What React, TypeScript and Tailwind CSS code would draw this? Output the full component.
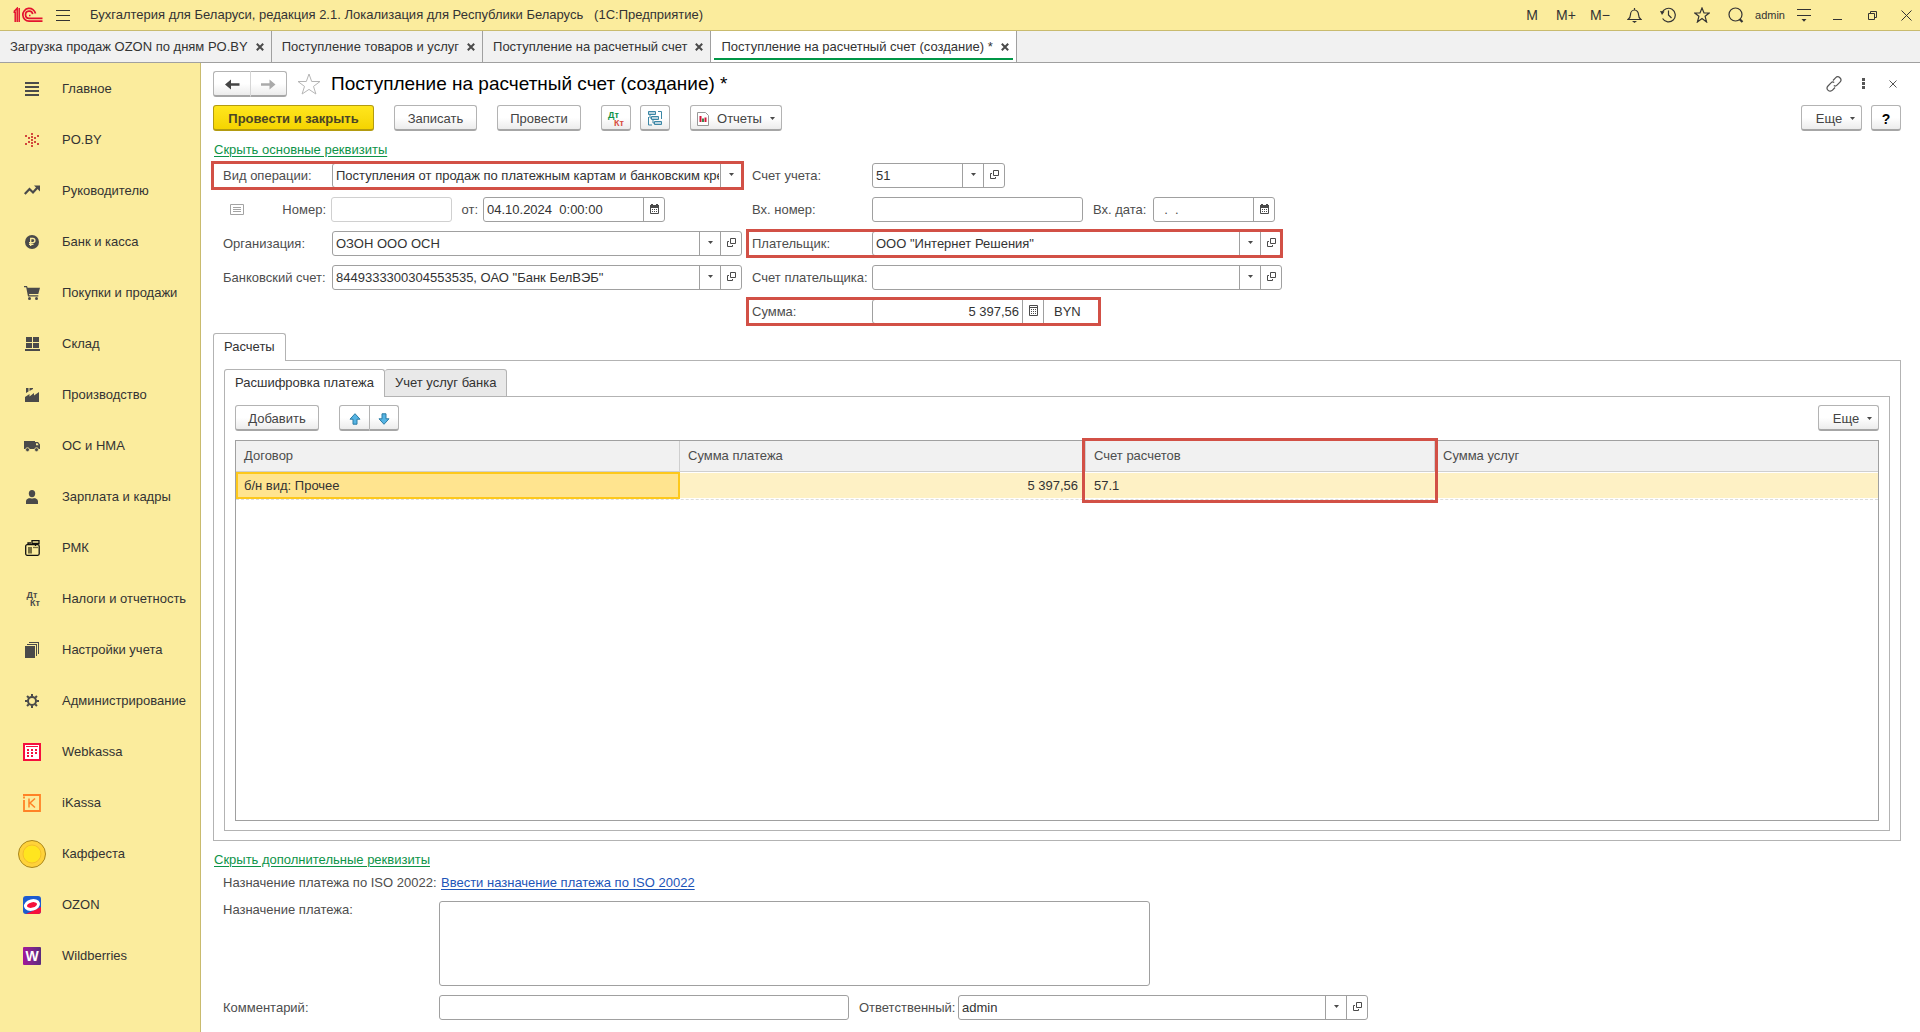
import { useState } from "react";
import type { ReactNode } from "react";

const INK = "#4a4a4a";

function ArrowDown() {
  return (
    <svg width="5" height="3" viewBox="0 0 5 3" fill={INK} className="shrink-0">
      <path d="M0 0h5L2.500 3z" />
    </svg>
  );
}

function OpenIcon() {
  return (
    <svg width="9" height="9" viewBox="0 0 9 9" fill="none" stroke={INK} className="shrink-0">
      <path d="M3.500.5h5v5h-5zM2 3.500H.5v5h5V7" />
    </svg>
  );
}

function CalendarIcon() {
  return (
    <svg width="9" height="10" viewBox="0 0 9 10" className="shrink-0">
      <path d="M.5 2.500h8v7h-8z" fill="none" stroke={INK} />
      <path d="M0 1h1V0h2v1h3V0h2v1h1v3H0z" fill={INK} />
      <path d="M2 5h1v1H2zM4 5h1v1H4zM6 5h1v1H6zM2 7h1v1H2zM4 7h1v1H4zM6 7h1v1H6z" fill={INK} />
    </svg>
  );
}

function CalculatorIcon() {
  return (
    <svg width="9" height="11" viewBox="0 0 9 11" className="shrink-0">
      <path d="M.5.5h8v10h-8zM.5 2.500h8" fill="none" stroke={INK} />
      <path d="M2 4h1v1H2zM4 4h1v1H4zM6 4h1v1H6zM2 6h1v1H2zM4 6h1v1H4zM6 6h1v1H6zM2 8h1v1H2zM4 8h1v1H4zM6 8h1v1H6z" fill={INK} />
    </svg>
  );
}

function CloseCross() {
  return (
    <svg width="8" height="8" viewBox="0 0 8 8" stroke={INK} strokeWidth="2">
      <path d="M.8.8l6.400 6.400M7.200.8L.8 7.200" />
    </svg>
  );
}

function Logo() {
  return (
    <svg width="30" height="16" viewBox="0 0 30 16" fill="none" stroke="#e3122f" strokeWidth="1.700">
      <path d="M1 4.500L4.200 1.200V15M.5 5.200h1.700V15M6.200 1v14" strokeWidth="1.500" />
      <path d="M22.500 6.500A6.400 6.400 0 1 0 16 14.200h13.500" />
      <path d="M19.700 7.200a3.600 3.600 0 1 0-3.600 4.100h13.400" />
      <path d="M16 8.600h1.500" strokeWidth="1.500" />
    </svg>
  );
}

type NavItem = { label: string; icon: ReactNode };

const rays = [0, 45, 90, 135, 180, 225, 270, 315];

const navItems: NavItem[] = [
  {
    label: "Главное",
    icon: (
      <svg width="14" height="14" viewBox="0 0 14 14" fill={INK}>
        <path d="M0 0h14v2H0zM0 4h14v2H0zM0 8h14v2H0zM0 12h14v2H0z" />
      </svg>
    ),
  },
  {
    label: "PO.BY",
    icon: (
      <svg width="14" height="14" viewBox="0 0 14 14" fill="#d2483c">
        <path d="M6 0h2v2H6zM6 3h2v2H6zM6 6h2v2H6zM6 9h2v2H6zM6 12h2v2H6zM0 2h2v2H0zM3 4h2v2H3zM12 2h2v2h-2zM9 4h2v2H9zM0 10h2v2H0zM3 8h2v2H3zM12 10h2v2h-2zM9 8h2v2H9z" />
      </svg>
    ),
  },
  {
    label: "Руководителю",
    icon: (
      <svg width="16" height="12" viewBox="0 0 16 12" fill="none" stroke={INK} strokeWidth="2.200">
        <path d="M.8 9l4.700-5L9 7.500l4.500-5" />
        <path d="M10 .5h6v6z" fill={INK} stroke="none" />
      </svg>
    ),
  },
  {
    label: "Банк и касса",
    icon: (
      <svg width="14" height="14" viewBox="0 0 14 14">
        <circle cx="7" cy="7" r="7" fill={INK} />
        <path d="M5.700 11V3.500h2.100a2 2 0 0 1 0 4.200H4M4 9.300h4.500" fill="none" stroke="#fbec9d" strokeWidth="1.300" />
      </svg>
    ),
  },
  {
    label: "Покупки и продажи",
    icon: (
      <svg width="16" height="14" viewBox="0 0 16 14" fill={INK}>
        <path d="M0 0h3l.6 1.700H16L14.300 8H5l.3 1.300h9v1.200H4L2.200 1.200H0z" />
        <circle cx="5.500" cy="12.500" r="1.500" />
        <circle cx="12.500" cy="12.500" r="1.500" />
      </svg>
    ),
  },
  {
    label: "Склад",
    icon: (
      <svg width="15" height="14" viewBox="0 0 15 14" fill={INK}>
        <path d="M1 0h6v5H1zM8 0h6v5H8zM1 6h6v5H1zM8 6h6v5H8zM0 12h15v2H0z" />
      </svg>
    ),
  },
  {
    label: "Производство",
    icon: (
      <svg width="14" height="14" viewBox="0 0 14 14" fill={INK}>
        <path d="M0 14V9l4.500-3v2.500L9 5v2.500L14 4v10zM1 0h2.500v3.500L1 5zM4.500 0H8v1L4.500 3z" />
      </svg>
    ),
  },
  {
    label: "ОС и НМА",
    icon: (
      <svg width="16" height="12" viewBox="0 0 16 12" fill={INK}>
        <path fillRule="evenodd" d="M0 1h11v8H0zM11 2h3l2 2.500V9h-5zM12 3.200v2h2.600l-1-2z" />
        <circle cx="3.500" cy="9.700" r="2" stroke="#fbec9d" strokeWidth=".8" />
        <circle cx="12.500" cy="9.700" r="2" stroke="#fbec9d" strokeWidth=".8" />
      </svg>
    ),
  },
  {
    label: "Зарплата и кадры",
    icon: (
      <svg width="12" height="14" viewBox="0 0 12 14" fill={INK}>
        <ellipse cx="6" cy="3.600" rx="3.200" ry="3.600" />
        <path d="M0 14v-2.500C0 9 2.500 8.300 4 8c1 .7 3 .7 4 0 1.500.3 4 1 4 3.500V14z" />
      </svg>
    ),
  },
  {
    label: "РМК",
    icon: (
      <svg width="15" height="16" viewBox="0 0 15 16" fill="none" stroke="#111" strokeWidth="1.300">
        <rect x=".7" y="4.700" width="13.500" height="10.600" rx="1.500" />
        <path d="M7 .7h7v2.800H7zM10.500 3.500V6" />
        <path d="M3 5V3h3" />
        <path d="M3 7h4v6.500H3z" fill="#77703f" stroke="none" />
        <path d="M8 7.500h5" stroke="#77703f" />
      </svg>
    ),
  },
  {
    label: "Налоги и отчетность",
    icon: (
      <span className="flex w-4 flex-col text-[9px] font-bold leading-[8px] text-[#4a4a4a]" aria-hidden="true">
        <span>Дт</span>
        <span className="self-end">Кт</span>
      </span>
    ),
  },
  {
    label: "Настройки учета",
    icon: (
      <svg width="14" height="16" viewBox="0 0 14 16" fill={INK}>
        <path d="M0 4h10v12H0zM2 2h10v12h-1V3H2zM4 0h10v12h-1V1H4z" />
      </svg>
    ),
  },
  {
    label: "Администрирование",
    icon: (
      <svg width="14" height="14" viewBox="0 0 14 14" fill="none" stroke={INK} strokeWidth="2">
        <circle cx="7" cy="7" r="4" />
        {rays.map((deg) => (
          <path key={deg} d="M7 0v2.500" transform={`rotate(${deg} 7 7)`} />
        ))}
      </svg>
    ),
  },
  {
    label: "Webkassa",
    icon: (
      <svg width="18" height="18" viewBox="0 0 18 18">
        <path d="M1 1h16v16H1z" fill="#fff" stroke="#f5103c" strokeWidth="2" />
        <path d="M3 3h12v1H3zM4 6h2v2H4zM8 6h2v2H8zM12 6h2v2h-2zM4 9h2v2H4zM8 9h2v2H8zM12 9h2v2h-2zM4 12h2v2H4zM8 12h2v2H8z" fill="#f5103c" />
      </svg>
    ),
  },
  {
    label: "iKassa",
    icon: (
      <svg width="18" height="18" viewBox="0 0 18 18" fill="none" stroke="#ff8226" strokeWidth="1.800">
        <path d="M0 1h17v16H1V6M1 2.500V4.500" />
        <path d="M6 4.500v9M12 4.500L7 9l5 4.500" strokeWidth="1.500" />
      </svg>
    ),
  },
  {
    label: "Каффеста",
    icon: (
      <svg width="28" height="28" viewBox="0 0 28 28">
        <circle cx="14" cy="14" r="13.500" fill="#ffd23a" stroke="#a9861c" />
        <circle cx="14" cy="14" r="9" fill="#ffe51f" stroke="#f5bf2a" />
      </svg>
    ),
  },
  {
    label: "OZON",
    icon: (
      <svg width="18" height="18" viewBox="0 0 18 18">
        <rect width="18" height="18" rx="3" fill="#1c5bd0" />
        <path d="M3 18l15-7v4a3 3 0 0 1-3 3z" fill="#f5103c" />
        <ellipse cx="9" cy="9" rx="6.600" ry="4.200" fill="#f5103c" stroke="#fff" strokeWidth="3" transform="rotate(-14 9 9)" />
      </svg>
    ),
  },
  {
    label: "Wildberries",
    icon: (
      <span
        className="flex h-[18px] w-[18px] items-center justify-center rounded-[1px] bg-linear-to-r from-[#a3149b] to-[#5a2a7d] text-sm font-bold text-white"
        aria-hidden="true"
      >
        W
      </span>
    ),
  },
];

const windowTabs = [
  "Загрузка продаж OZON по дням PO.BY",
  "Поступление товаров и услуг",
  "Поступление на расчетный счет",
  "Поступление на расчетный счет (создание) *",
];

function TitleBar() {
  return (
    <header className="flex h-[31px] items-center border-b border-[#c9bb6e] bg-[#fbec9d] pl-[13px] pr-[6px]">
      <Logo />
      <button aria-label="Меню" className="ml-[13px] mr-5">
        <svg width="14" height="11" viewBox="0 0 14 11" stroke="#333">
          <path d="M0 .5h14M0 5.500h14M0 10.500h14" />
        </svg>
      </button>
      <span className="whitespace-pre">
        {"Бухгалтерия для Беларуси, редакция 2.1. Локализация для Республики Беларусь   (1С:Предприятие)"}
      </span>
      <div className="ml-auto flex items-center gap-[18px] whitespace-nowrap text-[#333]">
        <button className="flex w-4 justify-center text-sm">M</button>
        <button className="flex w-4 justify-center text-sm">M+</button>
        <button className="flex w-4 justify-center text-sm">M−</button>
        <button aria-label="Уведомления" className="flex w-4 justify-center">
          <svg width="15" height="15" viewBox="0 0 15 15" fill="none" stroke="#333" strokeWidth="1.200">
            <path d="M7.500 0v1.500M1 11.500h13c-2-1.500-2.500-2.500-2.500-5a4 4.500 0 0 0-8 0c0 2.500-.5 3.500-2.500 5z" />
            <path d="M5 13h5l-2.500 2z" fill="#333" stroke="none" />
          </svg>
        </button>
        <button aria-label="История" className="flex w-4 justify-center">
          <svg width="16" height="16" viewBox="0 0 16 16" fill="none" stroke="#333" strokeWidth="1.200">
            <path d="M2 6a6.800 6.800 0 1 1 .6 5.500M8.500 3.500V8l3 3" />
            <path d="M0 4l4.500.5L2 8z" fill="#333" stroke="none" />
          </svg>
        </button>
        <button aria-label="Избранное" className="flex w-4 justify-center">
          <svg width="16" height="16" viewBox="0 0 16 16" fill="none" stroke="#333" strokeWidth="1.200">
            <path d="M8 1l2 5h5.200l-4.100 3.300L12.600 15 8 11.600 3.400 15l1.500-5.700L.8 6H6z" />
          </svg>
        </button>
        <button aria-label="Поиск" className="flex w-4 justify-center">
          <svg width="16" height="16" viewBox="0 0 16 16" fill="none" stroke="#333" strokeWidth="1.200">
            <circle cx="7.500" cy="7.500" r="6.500" />
            <path d="M11.500 12l3 3" strokeWidth="2.200" />
          </svg>
        </button>
        <button className="flex w-4 justify-center text-[11px]">admin</button>
        <button aria-label="Настройки" className="flex w-4 justify-center">
          <svg width="14" height="13" viewBox="0 0 14 13" stroke="#333">
            <path d="M0 .5h14M0 6.500h14" />
            <path d="M4.500 10h5L7 12.800z" fill="#333" stroke="none" />
          </svg>
        </button>
        <button aria-label="Свернуть" className="flex w-4 justify-center">
          <svg width="10" height="9" viewBox="0 0 10 9" stroke="#333">
            <path d="M0 8.500h9" />
          </svg>
        </button>
        <button aria-label="Восстановить" className="flex w-4 justify-center">
          <svg width="9" height="9" viewBox="0 0 9 9" fill="none" stroke="#333">
            <path d="M.5 2.500h6v6h-6zM2.500 2.500v-2h6v6h-2" />
          </svg>
        </button>
        <button aria-label="Закрыть" className="flex w-4 justify-center">
          <svg width="11" height="11" viewBox="0 0 11 11" stroke="#333">
            <path d="M.5.5l10 10M10.500.5l-10 10" />
          </svg>
        </button>
      </div>
    </header>
  );
}

function WindowTabs() {
  const [active, setActive] = useState(3);
  return (
    <nav className="flex h-8 border-b border-[#a0a0a0] bg-[#f1f1f1]">
      {windowTabs.map((title, i) => (
        <div
          key={title}
          className={`relative flex items-center gap-2 whitespace-nowrap border-r border-[#a0a0a0] pl-[10px] pr-[7px] ${i === active ? "bg-white" : ""}`}
        >
          <button onClick={() => setActive(i)}>{title}</button>
          <button aria-label="Закрыть вкладку">
            <CloseCross />
          </button>
          {i === active && <span className="absolute inset-x-[3px] bottom-[2px] h-[2px] bg-[#009646]" />}
        </div>
      ))}
    </nav>
  );
}

function Button({ children, className = "", label }: { children: ReactNode; className?: string; label?: string }) {
  return (
    <button
      aria-label={label}
      className={`flex h-[26px] items-center justify-center whitespace-nowrap rounded-[3px] border border-b-2 border-[#b3b3b3] border-b-[#a6a6a6] bg-linear-to-b from-white from-50% to-[#ececec] pt-[2px] text-[#444] ${className}`}
    >
      {children}
    </button>
  );
}

// Red frame round the requisites that matter for this operation
function Highlight({ className = "" }: { className?: string }) {
  return <span className={`pointer-events-none absolute border-[3px] border-[#d25046] ${className}`} />;
}

type FieldProps = {
  id: string;
  value?: string;
  className?: string;
  inputClass?: string;
  controls?: ("list" | "open" | "date" | "calc")[];
};

const controlIcons = {
  list: { icon: <ArrowDown />, title: "Выбрать из списка" },
  open: { icon: <OpenIcon />, title: "Открыть" },
  date: { icon: <CalendarIcon />, title: "Выбрать дату" },
  calc: { icon: <CalculatorIcon />, title: "Калькулятор" },
};

function Field({ id, value = "", className = "", inputClass = "", controls = [] }: FieldProps) {
  return (
    <div className={`flex h-[25px] shrink-0 rounded-[3px] border border-[#a0a0a0] bg-white ${className}`}>
      <input id={id} defaultValue={value} className={`min-w-0 flex-1 bg-transparent px-[3px] outline-none ${inputClass}`} />
      {controls.map((c) => (
        <button
          key={c}
          aria-label={controlIcons[c].title}
          className="flex w-[21px] shrink-0 items-center justify-center border-l border-[#a0a0a0] pb-[2px]"
        >
          {controlIcons[c].icon}
        </button>
      ))}
    </div>
  );
}

function Label({ id, children, className = "" }: { id: string; children: ReactNode; className?: string }) {
  return (
    <label htmlFor={id} className={`shrink-0 whitespace-nowrap text-[#4d4d4d] ${className}`}>
      {children}
    </label>
  );
}

function Requisites() {
  return (
    <div className="flex gap-[10px] pl-[10px]">
      <div className="flex w-[519px] flex-col gap-[9px]">
        <div className="relative flex items-center">
          <Label id="operation" className="w-[109px]">Вид операции:</Label>
          <div className="relative flex h-[25px] flex-1 rounded-[3px] border border-[#a0a0a0]">
            <select id="operation" className="w-full appearance-none pl-[3px] pr-[22px] outline-none">
              <option>Поступления от продаж по платежным картам и банковским кредитам</option>
            </select>
            <span className="pointer-events-none absolute inset-y-0 right-0 flex w-[21px] items-center justify-center border-l border-[#a0a0a0] bg-white pb-[2px]">
              <ArrowDown />
            </span>
          </div>
          <Highlight className="-inset-y-[2px] -left-3 -right-[2px]" />
        </div>
        <div className="flex items-center">
          <svg width="14" height="11" viewBox="0 0 14 11" fill="none" stroke="#a3a3a3" className="ml-[7px]">
            <path d="M.5.5h13v10H.5zM3 3.500h8M3 5.500h8M3 7.500h8" />
          </svg>
          <Label id="number" className="w-[87px] pr-[5px] text-right">Номер:</Label>
          <Field id="number" className="w-[121px] border-[#d0d0d0]" />
          <Label id="date" className="w-[31px] pr-[5px] text-right">от:</Label>
          <Field id="date" value="04.10.2024  0:00:00" className="w-[182px]" controls={["date"]} />
        </div>
        <div className="flex items-center">
          <Label id="organization" className="w-[109px]">Организация:</Label>
          <Field id="organization" value="ОЗОН ООО ОСН" className="flex-1" controls={["list", "open"]} />
        </div>
        <div className="flex items-center">
          <Label id="bank-account" className="w-[109px]">Банковский счет:</Label>
          <Field id="bank-account" value='8449333300304553535, ОАО "Банк БелВЭБ"' className="flex-1" controls={["list", "open"]} />
        </div>
      </div>

      <div className="flex w-[530px] flex-col gap-[9px]">
        <div className="flex items-center">
          <Label id="account" className="w-[120px]">Счет учета:</Label>
          <Field id="account" value="51" className="w-[133px]" controls={["list", "open"]} />
        </div>
        <div className="flex items-center">
          <Label id="in-number" className="w-[120px]">Вх. номер:</Label>
          <Field id="in-number" className="w-[211px]" />
          <Label id="in-date" className="w-[70px] pl-[10px]">Вх. дата:</Label>
          <Field id="in-date" value="  .  ." className="w-[122px]" inputClass="text-[#4d4d4d]" controls={["date"]} />
        </div>
        <div className="relative flex items-center">
          <Label id="payer" className="w-[120px]">Плательщик:</Label>
          <Field id="payer" value='ООО "Интернет Решения"' className="flex-1" controls={["list", "open"]} />
          <Highlight className="-inset-y-[2px] -left-[6px] -right-[1px]" />
        </div>
        <div className="flex items-center">
          <Label id="payer-account" className="w-[120px]">Счет плательщика:</Label>
          <Field id="payer-account" className="flex-1" controls={["list", "open"]} />
        </div>
        <div className="relative flex w-[348px] items-center">
          <Label id="sum" className="w-[120px]">Сумма:</Label>
          <Field id="sum" value="5 397,56" className="w-[172px] rounded-r-none" inputClass="text-right" controls={["calc"]} />
          <span className="pl-[10px]">BYN</span>
          <Highlight className="-inset-y-[2px] -left-[6px] -right-[1px]" />
        </div>
      </div>
    </div>
  );
}

function PaymentTable() {
  const th = "relative border-b border-r border-[#cfcfcf] pl-2 text-left font-normal text-[#4d4d4d]";
  return (
    <div className="flex-1 border border-[#a0a0a0]">
      <table className="w-full table-fixed border-separate border-spacing-0 border-b border-dashed border-[#dcdcdc]">
        <colgroup>
          <col className="w-[444px]" />
          <col className="w-[406px]" />
          <col className="w-[349px]" />
          <col />
        </colgroup>
        <thead>
          <tr className="h-[31px] bg-[#f1f1f1]">
            <th className={th}>Договор</th>
            <th className={th}>Сумма платежа</th>
            <th className={th}>
              Счет расчетов
              <Highlight className="-left-[4px] -right-[4px] -top-[3px] z-10 h-[65px]" />
            </th>
            <th className={`${th} border-r-0`}>Сумма услуг</th>
          </tr>
        </thead>
        <tbody>
          <tr className="h-[27px] bg-[#fef1c5]">
            <td className="border-2 border-[#fdc81c] bg-[#ffe48f] pl-[6px]">б/н вид: Прочее</td>
            <td className="border-y border-y-white pr-2 text-right">5 397,56</td>
            <td className="border-y border-y-white pl-2">57.1</td>
            <td className="border-y border-y-white pl-2"></td>
          </tr>
        </tbody>
      </table>
    </div>
  );
}

export default function App() {
  return (
    <div className="flex min-h-screen flex-col bg-white font-['Liberation_Sans',Arial,sans-serif] text-[13px] leading-5 text-[#333]">
      <TitleBar />
      <WindowTabs />
      <div className="flex flex-1">
        <aside className="w-[201px] shrink-0 border-r border-[#c9bb6e] bg-[#fbec9d]">
          {navItems.map((item) => (
            <button key={item.label} className="flex h-[51px] w-full items-center gap-[13px] whitespace-nowrap pl-[15px]">
              <span className="flex w-[34px] shrink-0 justify-center">{item.icon}</span>
              {item.label}
            </button>
          ))}
        </aside>

        <main className="flex min-w-0 flex-1 flex-col gap-[9px] pb-3 pl-3 pr-[19px] pt-2">
          <div className="flex h-[25px] items-center">
            <div className="flex">
              <Button label="Назад" className="w-[38px] rounded-r-none border-r-[#d5d5d5]">
                <svg width="15" height="11" viewBox="0 0 15 11">
                  <path d="M0 5.500L6 .5V4.200h8.500v2.600H6v3.700z" fill="#444" />
                </svg>
              </Button>
              <Button label="Вперед" className="w-9 rounded-l-none border-l-0">
                <svg width="15" height="11" viewBox="0 0 15 11">
                  <path d="M14.500 5.500L8.500.5V4.200H0v2.600h8.500v3.700z" fill="#aaa" />
                </svg>
              </Button>
            </div>
            <button aria-label="Добавить в избранное" className="ml-[10px] mr-[10px]">
              <svg width="24" height="22" viewBox="0 0 24 22" fill="none" stroke="#b5b5b5">
                <path d="M12 1l2.700 7.500H23l-6.500 4.900 2.400 7.600L12 16.400 5.100 21l2.400-7.600L1 8.500h8.300z" />
              </svg>
            </button>
            <h1 className="text-[19px] leading-6 text-black">Поступление на расчетный счет (создание) *</h1>
            <div className="ml-auto flex items-center">
              <button aria-label="Получить ссылку" className="w-[33px]">
                <svg width="16" height="16" viewBox="0 0 16 16" fill="none" stroke="#555" strokeWidth="1.200">
                  <path d="M7 4.500l2.500-2.700a3 3 0 0 1 4.500 4.300L11 9.200c-1 1-2.300 1-3.200.3M9 11.500l-2.500 2.700A3 3 0 0 1 2 10l3-3.200c1-1 2.300-1 3.200-.3" />
                </svg>
              </button>
              <button aria-label="Еще действия" className="w-[30px]">
                <svg width="3" height="11" viewBox="0 0 3 11" fill="#555" className="ml-[3px]">
                  <path d="M0 0h3v3H0zM0 4h3v3H0zM0 8h3v3H0z" />
                </svg>
              </button>
              <button aria-label="Закрыть форму" className="pr-1">
                <svg width="8" height="8" viewBox="0 0 8 8" stroke="#555">
                  <path d="M.5.5l7 7M7.500.5l-7 7" />
                </svg>
              </button>
            </div>
          </div>

          <div className="flex">
            <button className="mr-5 flex h-[26px] w-[161px] items-center justify-center rounded-[3px] border border-b-2 border-[#b39b10] bg-linear-to-b from-[#ffe61c] to-[#f5d400] pt-[2px] font-bold text-[#4a4425]">
              Провести и закрыть
            </button>
            <Button className="mr-5 w-[83px]">Записать</Button>
            <Button className="mr-5 w-[84px]">Провести</Button>
            <Button label="Дт Кт" className="mr-[9px] w-[30px]">
              <span className="flex w-4 flex-col text-[9px] font-bold leading-[8px] text-[#0d9348]">
                <span className="self-start">Дт</span>
                <span className="self-end text-[#d84c3e]">Кт</span>
              </span>
            </Button>
            <Button label="Структура подчиненности" className="mr-5 w-[30px]">
              <svg width="14" height="15" viewBox="0 0 14 15" fill="#b9d3df" stroke="#3b86a5">
                <path d="M.5.5h7v3h-7zM3.500 5.500h7v3h-7zM6.500 10.500h7v3h-7z" />
                <path d="M10 .5h3.500V8M.5 6v8H4M2 3.500v3.500h1.500M5 8.500V12h1.500" fill="none" />
              </svg>
            </Button>
            <Button className="w-[92px] gap-2">
              <svg width="12" height="14" viewBox="0 0 12 14">
                <path d="M.5.5h8l3 3v10H.5z" fill="#fff" stroke="#999" />
                <path d="M2.500 4h2v6h-2z" fill="#d3163a" />
                <path d="M5 6.500h2V10H5z" fill="#3a8a4c" />
                <path d="M7.500 5.500h2V10h-2z" fill="#d3163a" />
              </svg>
              Отчеты
              <ArrowDown />
            </Button>
            <Button className="ml-auto mr-[9px] w-[61px] gap-2 pl-2">
              Еще <ArrowDown />
            </Button>
            <Button label="Справка" className="w-[30px] text-sm font-bold text-black">?</Button>
          </div>

          <div>
            <div className="mb-[3px] flex h-5 items-center">
              <a href="#" className="pl-px text-[#0d9348] underline underline-offset-2">Скрыть основные реквизиты</a>
            </div>
            <Requisites />
          </div>

          <section className="flex flex-1 flex-col">
            <div className="relative -mb-px flex">
              <button className="h-7 rounded-t-[3px] border border-b-0 border-[#b3b3b3] bg-white px-[10px] pb-[2px]">Расчеты</button>
            </div>
            <div className="flex flex-1 flex-col border border-[#b3b3b3] px-[10px] pb-[9px] pt-2">
              <div className="relative -mb-px flex">
                <button className="h-7 rounded-t-[3px] border border-b-0 border-[#b3b3b3] bg-white px-[10px] pb-[2px]">
                  Расшифровка платежа
                </button>
                <button className="h-7 rounded-t-[3px] border border-l-0 border-[#b3b3b3] bg-[#e9e9e9] px-[10px] pb-px">
                  Учет услуг банка
                </button>
              </div>
              <div className="flex flex-1 flex-col gap-[9px] border border-[#b3b3b3] px-[10px] pb-[9px] pt-2">
                <div className="flex">
                  <Button className="mr-5 w-[84px]">Добавить</Button>
                  <Button label="Переместить вверх" className="w-[31px] rounded-r-none">
                    <svg width="12" height="12" viewBox="0 0 12 12" fill="#55b4e4" stroke="#2c7ca4">
                      <path d="M6 .7l5 5.500H8v5H4v-5H1z" />
                    </svg>
                  </Button>
                  <Button label="Переместить вниз" className="w-[29px] rounded-l-none border-l-0">
                    <svg width="12" height="12" viewBox="0 0 12 12" fill="#55b4e4" stroke="#2c7ca4">
                      <path d="M6 11.300l5-5.500H8v-5H4v5H1z" />
                    </svg>
                  </Button>
                  <Button className="ml-auto w-[61px] gap-2 pl-2">
                    Еще <ArrowDown />
                  </Button>
                </div>
                <PaymentTable />
              </div>
            </div>
          </section>

          <div className="flex flex-col gap-1">
            <div className="flex h-5 items-center">
              <a href="#" className="pl-px text-[#0d9348] underline underline-offset-2">Скрыть дополнительные реквизиты</a>
            </div>
            <div className="flex h-[18px] items-center pl-[10px]">
              <span className="w-[218px] text-[#4d4d4d]">Назначение платежа по ISO 20022:</span>
              <a href="#" className="text-[#1d55b8] underline underline-offset-2">Ввести назначение платежа по ISO 20022</a>
            </div>
          </div>
          <div className="flex pl-[10px]">
            <Label id="purpose" className="w-[216px] leading-[18px]">Назначение платежа:</Label>
            <textarea id="purpose" className="h-[85px] w-[711px] resize-none rounded-[3px] border border-[#a0a0a0] p-1 outline-none" />
          </div>
          <div className="flex items-center pl-[10px]">
            <Label id="comment" className="w-[216px]">Комментарий:</Label>
            <Field id="comment" className="w-[410px]" />
            <Label id="responsible" className="w-[109px] pl-[10px]">Ответственный:</Label>
            <Field id="responsible" value="admin" className="w-[410px]" controls={["list", "open"]} />
          </div>
        </main>
      </div>
    </div>
  );
}
